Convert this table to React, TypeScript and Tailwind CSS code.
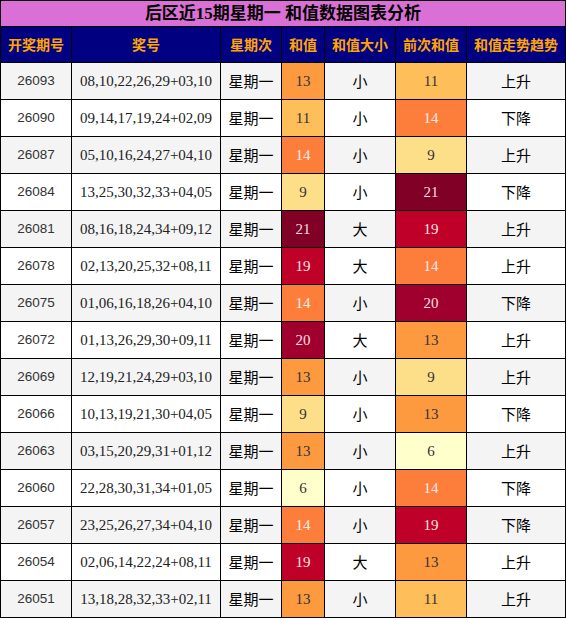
import React from "react";

type Row = [string, string, number, string, number, string];

const rows: Row[] = [
  ["26093", "08,10,22,26,29+03,10", 13, "小", 11, "上升"],
  ["26090", "09,14,17,19,24+02,09", 11, "小", 14, "下降"],
  ["26087", "05,10,16,24,27+04,10", 14, "小", 9, "上升"],
  ["26084", "13,25,30,32,33+04,05", 9, "小", 21, "下降"],
  ["26081", "08,16,18,24,34+09,12", 21, "大", 19, "上升"],
  ["26078", "02,13,20,25,32+08,11", 19, "大", 14, "上升"],
  ["26075", "01,06,16,18,26+04,10", 14, "小", 20, "下降"],
  ["26072", "01,13,26,29,30+09,11", 20, "大", 13, "上升"],
  ["26069", "12,19,21,24,29+03,10", 13, "小", 9, "上升"],
  ["26066", "10,13,19,21,30+04,05", 9, "小", 13, "下降"],
  ["26063", "03,15,20,29,31+01,12", 13, "小", 6, "上升"],
  ["26060", "22,28,30,31,34+01,05", 6, "小", 14, "下降"],
  ["26057", "23,25,26,27,34+04,10", 14, "小", 19, "下降"],
  ["26054", "02,06,14,22,24+08,11", 19, "大", 13, "上升"],
  ["26051", "13,18,28,32,33+02,11", 13, "小", 11, "上升"],
];

const colorClass: Record<number, string> = {
  6: "bg-[#ffffcc] text-[#333]",
  9: "bg-[#fedf89] text-[#333]",
  11: "bg-[#febf5a] text-[#333]",
  13: "bg-[#fd9a40] text-[#333]",
  14: "bg-[#fd7d3a] text-[#fbeee6]",
  19: "bg-[#bf0029] text-[#f6e2e4]",
  20: "bg-[#a0002d] text-[#f4e0e2]",
  21: "bg-[#800026] text-[#f2dee2]",
};

const headers = ["开奖期号", "奖号", "星期次", "和值", "和值大小", "前次和值", "和值走势趋势"];

const cjk = "font-['Noto_Sans_CJK_SC',sans-serif]";
const serif = "font-['Liberation_Serif','Noto_Sans_CJK_SC',serif]";

export default function App() {
  return (
    <div className="w-[566px] h-[618px] bg-white">
      <div className="grid grid-cols-[70px_148px_60px_42px_70px_70px_98px] gap-px bg-black border border-black">
        <div className={`col-span-7 h-[25px] bg-[#da70d6] flex items-center justify-center text-[17px] font-bold text-black ${serif}`}>
          后区近15期星期一 和值数据图表分析
        </div>
        {headers.map((h) => (
          <div
            key={h}
            className={`h-[35px] bg-[#000080] flex items-center justify-center text-[14px] font-bold text-[#ffa500] ${cjk}`}
          >
            {h}
          </div>
        ))}
        {rows.map((r, i) => {
          const bg = i % 2 === 0 ? "bg-[#f4f4f4]" : "bg-white";
          return (
            <React.Fragment key={r[0]}>
              <div className={`h-[36px] ${bg} flex items-center justify-center text-[13.5px] text-[#333] font-['Liberation_Sans',sans-serif]`}>
                {r[0]}
              </div>
              <div className={`h-[36px] ${bg} flex items-center justify-center text-[15px] text-[#222] ${serif}`}>
                {r[1]}
              </div>
              <div className={`h-[36px] ${bg} flex items-center justify-center text-[15px] text-black ${cjk}`}>
                星期一
              </div>
              <div className={`h-[36px] ${colorClass[r[2]]} flex items-center justify-center text-[15px] ${serif}`}>
                {r[2]}
              </div>
              <div className={`h-[36px] ${bg} flex items-center justify-center text-[15px] text-black ${cjk}`}>
                {r[3]}
              </div>
              <div className={`h-[36px] ${colorClass[r[4]]} flex items-center justify-center text-[15px] ${serif}`}>
                {r[4]}
              </div>
              <div className={`h-[36px] ${bg} flex items-center justify-center text-[15px] text-black ${cjk}`}>
                {r[5]}
              </div>
            </React.Fragment>
          );
        })}
      </div>
    </div>
  );
}
